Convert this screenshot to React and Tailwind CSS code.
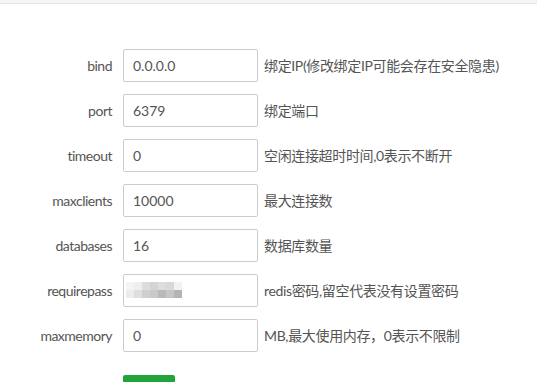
import React from 'react';

const rows = [
  { label: 'bind', value: '0.0.0.0', tip: '绑定IP(修改绑定IP可能会存在安全隐患)' },
  { label: 'port', value: '6379', tip: '绑定端口' },
  { label: 'timeout', value: '0', tip: '空闲连接超时时间,0表示不断开' },
  { label: 'maxclients', value: '10000', tip: '最大连接数' },
  { label: 'databases', value: '16', tip: '数据库数量' },
  { label: 'requirepass', value: null, tip: 'redis密码,留空代表没有设置密码' },
  { label: 'maxmemory', value: '0', tip: 'MB,最大使用内存，0表示不限制' },
];

// mosaic over the password value
const mosaic = [
  ['#f4f4f4', '#eeeeee', '#dcdcdc', '#d4d4d4', '#dddddd', '#d8d8d8', '#f2f2f2'],
  ['#ececec', '#dedede', '#cfcfcf', '#c9c9c9', '#b9b9b9', '#c6c6c6', '#b4b4b4'],
];

const Masked = () => (
  <div className="flex flex-col pl-[2px]">
    {mosaic.map((r, i) => (
      <div key={i} className="flex">
        {r.map((c, j) => (
          <div key={j} className="w-[8px] h-[8px]" style={{ background: c }} />
        ))}
      </div>
    ))}
  </div>
);

const App = () => {
  return (
    <div
      className="w-[537px] h-[382px] overflow-hidden bg-white text-[14px] text-[#555]"
      style={{ fontFamily: 'Lato, "Noto Sans CJK SC", sans-serif' }}
    >
      <div className="h-[4px] bg-[#f5f5f5] border-b border-[#e4e4e4]" />
      <div className="pt-[45px] flex flex-col gap-[13px]">
        {rows.map((row) => (
          <div key={row.label} className="flex items-center h-[32px]">
            <div className="w-[112px] text-right tracking-[-0.5px] text-[#555]">{row.label}</div>
            <div className="ml-[11px] w-[135px] h-[33px] border border-[#cccccc] rounded-[2px] flex items-center pl-[9px] text-[#555]">
              {row.value !== null ? row.value : <div className="-ml-[9px]"><Masked /></div>}
            </div>
            <div className="ml-[6px] tracking-[-0.35px] text-[#555] whitespace-nowrap">{row.tip}</div>
          </div>
        ))}
        <div className="pl-[123px] pt-[11px]">
          <div className="w-[52px] h-[30px] bg-[#20a53a] rounded-[2px]" />
        </div>
      </div>
    </div>
  );
};

export default App;
